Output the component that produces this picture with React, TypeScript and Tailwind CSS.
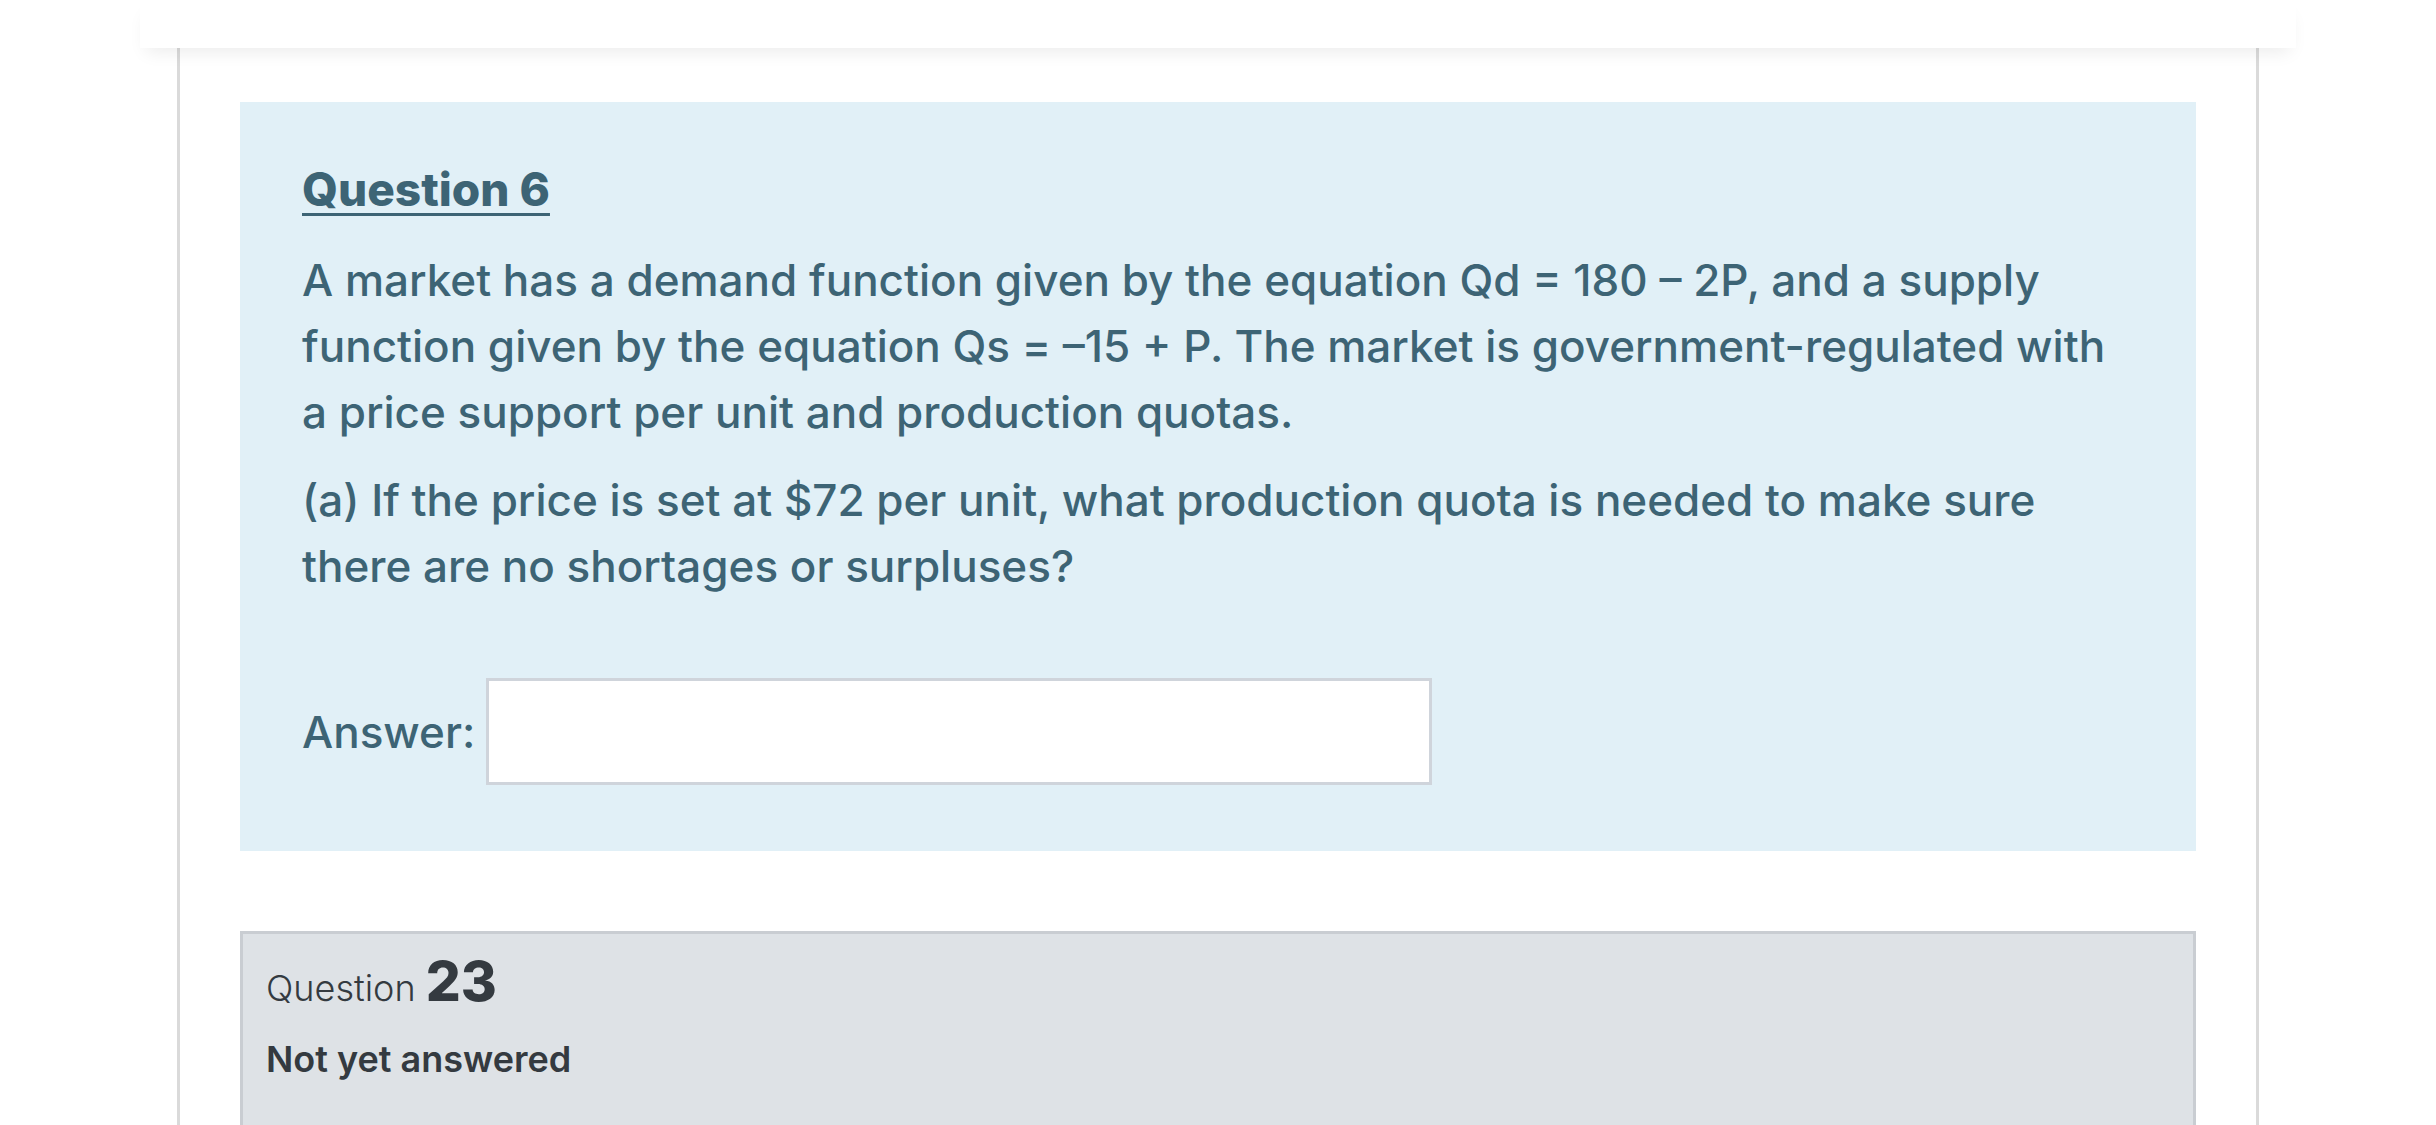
export default function App() {
  return (
    <div className="min-h-[1125px] bg-white font-['Inter','Liberation_Sans',sans-serif]">
      {/* top bar */}
      <div className="mx-[140px] h-[48px] bg-white relative z-10 shadow-[0_10px_18px_-6px_rgba(0,0,0,0.08)]" />

      <div className="px-[177px]">
        <div className="border-x-[3px] border-[#dadada] px-[60px] pt-[54px] min-h-[1077px]">
          {/* Formulation */}
          <div className="bg-[#e1f0f7] px-[62px] pt-[63px] pb-[66px] text-[#3d6475]">
            <h3 className="text-[46px] leading-[48px] font-extrabold underline decoration-[3px] underline-offset-[7px] mb-[34px]">
              Question 6
            </h3>
            <p className="text-[44px] leading-[66px] font-medium mb-[22px]">
              A market has a demand function given by the equation Qd = 180 – 2P, and a supply function given by the
              equation Qs = –15 + P. The market is government-regulated with a price support per unit and production
              quotas.
            </p>
            <p className="text-[44px] leading-[66px] font-medium">
              (a) If the price is set at $72 per unit, what production quota is needed to make sure there are no
              shortages or surpluses?
            </p>
            <div className="flex items-center gap-[11px] mt-[79px]">
              <label className="text-[44px] leading-[66px] font-medium">Answer:</label>
              <input
                type="text"
                className="w-[946px] h-[107px] bg-white border-[3px] border-[#cfd4db] outline-none"
              />
            </div>
          </div>

          {/* Info box */}
          <div className="mt-[80px] bg-[#dee2e6] border-[3px] border-[#c9cdd2] pl-[23px] pt-[16px] pb-[80px] text-[#343a40]">
            <h3 className="text-[36px] leading-[62px] font-light">
              Question <span className="text-[55px] font-extrabold">23</span>
            </h3>
            <div className="mt-[15px] text-[36px] leading-[51px] font-semibold">Not yet answered</div>
          </div>
        </div>
      </div>
    </div>
  );
}
